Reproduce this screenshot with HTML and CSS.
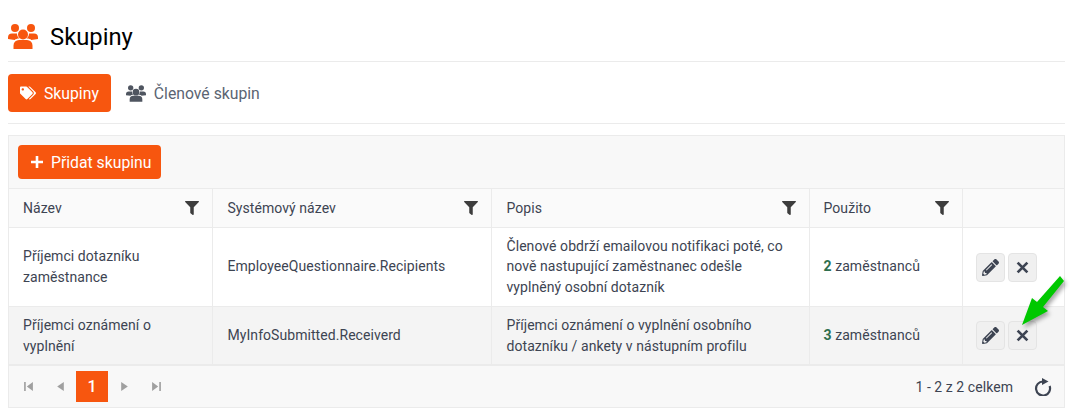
FILE: index.html
```html
<!DOCTYPE html>
<html>
<head>
    <title>Skupiny</title>
    <link rel="stylesheet" href="styles.css">
</head>
<body>
    <div class="page-title">
        <svg class="title-icon" viewBox="0 0 30 25"><circle cx="7" cy="4" r="4"/><circle cx="23" cy="4" r="4"/><circle cx="15" cy="10.500" r="5"/><path d="M5.500 25v-3.500a5.500 5.500 0 0 1 5.500-5.500h8a5.500 5.500 0 0 1 5.500 5.500V25zM0 15v-1.500a4 4 0 0 1 4-4h5c0 2 1 4 2.500 5-2.500 0-4 .5-4.800 1.500zM30 15v-1.500a4 4 0 0 0-4-4h-5c0 2-1 4-2.500 5 2.500 0 4 .5 4.800 1.500z"/></svg>
        <h1>Skupiny</h1>
    </div>

    <div class="tabs">
        <a class="tab active">
            <svg class="tag-icon" viewBox="0 0 640 512"><path d="M497.941 225.941L286.059 14.059A48 48 0 0 0 252.118 0H48C21.49 0 0 21.49 0 48v204.118a48 48 0 0 0 14.059 33.941l211.882 211.882c18.744 18.745 49.136 18.746 67.882 0l204.118-204.118c18.745-18.745 18.745-49.137 0-67.882zM112 160c-26.51 0-48-21.49-48-48s21.49-48 48-48 48 21.49 48 48-21.49 48-48 48zm513.941 133.823L421.823 497.941c-18.745 18.745-49.137 18.745-67.882 0l-.36-.36L527.64 323.522c16.999-16.999 26.36-39.6 26.36-63.64s-9.362-46.641-26.36-63.64L331.397 0h48.721a48 48 0 0 1 33.941 14.059l211.882 211.882c18.745 18.745 18.745 49.137 0 67.882z"/></svg>
            Skupiny
        </a>
        <a class="tab">
            <svg class="tab-icon" viewBox="0 0 30 25"><circle cx="7" cy="4" r="4"/><circle cx="23" cy="4" r="4"/><circle cx="15" cy="10.500" r="5"/><path d="M5.500 25v-3.500a5.500 5.500 0 0 1 5.500-5.500h8a5.500 5.500 0 0 1 5.500 5.500V25zM0 15v-1.500a4 4 0 0 1 4-4h5c0 2 1 4 2.500 5-2.500 0-4 .5-4.800 1.500zM30 15v-1.500a4 4 0 0 0-4-4h-5c0 2-1 4-2.500 5 2.500 0 4 .5 4.800 1.500z"/></svg>
            Členové skupin
        </a>
    </div>

    <div class="grid">
        <div class="toolbar">
            <button class="add-btn">
                <svg class="plus" viewBox="0 0 12 12"><path d="M6 0v12M0 6h12"/></svg>
                Přidat skupinu
            </button>
        </div>
        <table>
            <colgroup>
                <col class="col-name"><col class="col-system"><col class="col-desc"><col class="col-used"><col>
            </colgroup>
            <thead>
                <tr>
                    <th><div class="th-inner">Název <svg class="filter" viewBox="0 0 512 512"><path d="M487.976 0H24.028C2.71 0-8.047 25.866 7.058 40.971L192 225.941V432c0 7.831 3.821 15.17 10.237 19.662l80 55.98C298.02 518.69 320 507.493 320 487.98V225.941l184.947-184.97C520.021 25.896 509.338 0 487.976 0z"/></svg></div></th>
                    <th><div class="th-inner">Systémový název <svg class="filter" viewBox="0 0 512 512"><path d="M487.976 0H24.028C2.71 0-8.047 25.866 7.058 40.971L192 225.941V432c0 7.831 3.821 15.17 10.237 19.662l80 55.98C298.02 518.69 320 507.493 320 487.98V225.941l184.947-184.97C520.021 25.896 509.338 0 487.976 0z"/></svg></div></th>
                    <th><div class="th-inner">Popis <svg class="filter" viewBox="0 0 512 512"><path d="M487.976 0H24.028C2.71 0-8.047 25.866 7.058 40.971L192 225.941V432c0 7.831 3.821 15.17 10.237 19.662l80 55.98C298.02 518.69 320 507.493 320 487.98V225.941l184.947-184.97C520.021 25.896 509.338 0 487.976 0z"/></svg></div></th>
                    <th><div class="th-inner">Použito <svg class="filter" viewBox="0 0 512 512"><path d="M487.976 0H24.028C2.71 0-8.047 25.866 7.058 40.971L192 225.941V432c0 7.831 3.821 15.17 10.237 19.662l80 55.98C298.02 518.69 320 507.493 320 487.98V225.941l184.947-184.97C520.021 25.896 509.338 0 487.976 0z"/></svg></div></th>
                    <th></th>
                </tr>
            </thead>
            <tbody>
                <tr>
                    <td>Příjemci dotazníku zaměstnance</td>
                    <td>EmployeeQuestionnaire.Recipients</td>
                    <td>Členové obdrží emailovou notifikaci poté, co nově nastupující zaměstnanec odešle vyplněný osobní dotazník</td>
                    <td><b>2</b> zaměstnanců</td>
                    <td class="actions">
                        <button class="icon-btn"><svg class="pencil" viewBox="0 0 512 512"><path d="M497.9 142.1l-46.1 46.1c-4.7 4.7-12.3 4.7-17 0l-111-111c-4.7-4.7-4.7-12.3 0-17l46.1-46.1c18.7-18.7 49.1-18.7 67.9 0l60.1 60.1c18.8 18.7 18.8 49.1 0 67.9zM284.2 99.8L21.6 362.4.4 483.9c-2.9 16.4 11.4 30.6 27.8 27.8l121.5-21.3 262.6-262.6c4.7-4.7 4.7-12.3 0-17l-111-111c-4.8-4.7-12.4-4.7-17.1 0zM124.1 339.9c-5.5-5.5-5.5-14.3 0-19.8l154-154c5.5-5.5 14.3-5.5 19.8 0s5.5 14.3 0 19.8l-154 154c-5.5 5.5-14.3 5.5-19.8 0zM88 424h48v36.3l-64.5 11.3-31.1-31.1L51.7 376H88v48z"/></svg></button>
                        <button class="icon-btn"><svg class="times" viewBox="0 0 12 12"><path d="M1.500 1.500l9 9M10.500 1.500l-9 9"/></svg></button>
                    </td>
                </tr>
                <tr class="alt">
                    <td>Příjemci oznámení o vyplnění</td>
                    <td>MyInfoSubmitted.Receiverd</td>
                    <td>Příjemci oznámení o vyplnění osobního dotazníku / ankety v nástupním profilu</td>
                    <td><b>3</b> zaměstnanců</td>
                    <td class="actions">
                        <button class="icon-btn"><svg class="pencil" viewBox="0 0 512 512"><path d="M497.9 142.1l-46.1 46.1c-4.7 4.7-12.3 4.7-17 0l-111-111c-4.7-4.7-4.7-12.3 0-17l46.1-46.1c18.7-18.7 49.1-18.7 67.9 0l60.1 60.1c18.8 18.7 18.8 49.1 0 67.9zM284.2 99.8L21.6 362.4.4 483.9c-2.9 16.4 11.4 30.6 27.8 27.8l121.5-21.3 262.6-262.6c4.7-4.7 4.7-12.3 0-17l-111-111c-4.8-4.7-12.4-4.7-17.1 0zM124.1 339.9c-5.5-5.5-5.5-14.3 0-19.8l154-154c5.5-5.5 14.3-5.5 19.8 0s5.5 14.3 0 19.8l-154 154c-5.5 5.5-14.3 5.5-19.8 0zM88 424h48v36.3l-64.5 11.3-31.1-31.1L51.7 376H88v48z"/></svg></button>
                        <button class="icon-btn"><svg class="times" viewBox="0 0 12 12"><path d="M1.500 1.500l9 9M10.500 1.500l-9 9"/></svg></button>
                    </td>
                </tr>
            </tbody>
        </table>
        <div class="pager">
            <div class="pages">
                <span class="page-link"><svg class="page-icon" viewBox="0 0 10 10"><path d="M1 1h1.500v8H1zM9 1v8L3.500 5z"/></svg></span>
                <span class="page-link"><svg class="page-icon" viewBox="0 0 10 10"><path d="M8 1v8L2 5z"/></svg></span>
                <span class="page-num">1</span>
                <span class="page-link"><svg class="page-icon" viewBox="0 0 10 10"><path d="M2 1v8l6-4z"/></svg></span>
                <span class="page-link"><svg class="page-icon" viewBox="0 0 10 10"><path d="M9 1H7.500v8H9zM1 1v8l5.500-4z"/></svg></span>
            </div>
            <div class="pager-info">
                1 - 2 z 2 celkem
                <svg class="refresh" viewBox="0 0 18 18"><path class="refresh-arc" d="M9 3.500A7 7 0 1 0 15.600 8"/><path class="refresh-tip" d="M8 0v7l6.500-3.500z"/></svg>
            </div>
        </div>
    </div>

    <svg class="arrow" viewBox="0 0 54 60"><path d="M6 55L16 28l5 4L44 6l4 5-21 26 5 4z"/></svg>
</body>
</html>
```

FILE: styles.css
```css
body { margin: 0; padding: 0 5px 0 8px; font-family: Roboto, Arial, sans-serif; font-size: 14px; color: #3d4452; background: #fff; position: relative; }

.page-title { display: flex; align-items: center; gap: 12px; height: 62px; padding-top: 12px; box-sizing: border-box; border-bottom: 1px solid #ebebeb; }
.page-title h1 { margin: 0; font-size: 23.8px; font-weight: 400; color: #000; }
.title-icon { width: 30px; height: 25px; fill: #f7560f; }

.tabs { display: flex; gap: 5px; padding: 12px 0 11px; border-bottom: 1px solid #ebebeb; }
.tab { display: flex; align-items: center; gap: 8px; height: 38px; padding: 0 10px; border-radius: 4px; font-size: 15.75px; color: #5b6472; }
.tab.active { background: #f7560f; color: #fff; padding: 0 12px; }
.tab-icon { width: 20px; height: 17px; fill: #4f5560; }
.tag-icon { width: 16px; height: 14px; fill: #fff; }

.grid { margin-top: 11px; border: 1px solid #ebebeb; }
.toolbar { background: #f8f8f8; padding: 9px; height: 34px; }
.add-btn { display: flex; align-items: center; gap: 8px; height: 34px; padding: 0 10px 0 13px; border: none; border-radius: 4px; background: #f7560f; color: #fff; font-family: inherit; font-size: 15.75px; }
.plus { width: 12px; height: 12px; fill: none; stroke: #fff; stroke-width: 2.6; }

table { width: 100%; border-collapse: collapse; table-layout: fixed; }
.col-name { width: 203px; }
.col-system { width: 279px; }
.col-desc { width: 318px; }
.col-used { width: 153px; }
th, td { border: 1px solid #ebebeb; padding: 0 14px; text-align: left; font-weight: 400; line-height: 20.5px; letter-spacing: 0.06px; }
tr > :first-child { border-left: none; }
tr > :last-child { border-right: none; }
tr > :nth-child(2), tr > :nth-child(3) { padding-left: 15px; }
th { background: #fafafa; height: 38px; padding-right: 13px; }
td { height: 79px; padding-bottom: 1px; box-sizing: border-box; }
.alt td { height: 58px; background: #f4f4f4; padding-bottom: 0; }
td b { font-weight: 700; color: #2e6e4e; }
.th-inner { display: flex; justify-content: space-between; align-items: center; }
.filter { width: 14px; height: 14px; fill: #3d3d3d; }

td.actions { padding: 0 0 0 13px; white-space: nowrap; }
.icon-btn { display: inline-flex; align-items: center; justify-content: center; width: 29px; height: 29px; padding: 0; border: 1px solid #e4e4e4; border-radius: 4px; background: #f0f0f0; vertical-align: middle; }
.pencil { width: 17px; height: 17px; fill: #3d4452; }
.times { width: 13px; height: 13px; fill: none; stroke: #3d4452; stroke-width: 2.5; }

.pager { display: flex; justify-content: space-between; align-items: center; height: 41px; background: #f8f8f8; border-top: 1px solid #ebebeb; }
.pages { display: flex; align-items: center; padding-left: 3px; }
.page-link { display: flex; align-items: center; justify-content: center; width: 32px; height: 32px; }
.page-num { display: flex; align-items: center; justify-content: center; width: 32px; height: 31px; background: #f7560f; color: #fff; font-size: 16px; font-weight: 500; }
.page-icon { width: 11px; height: 11px; fill: #a0a0a0; }
.pager-info { display: flex; align-items: center; gap: 21px; padding-right: 12px; letter-spacing: 0.06px; }
.refresh { width: 18px; height: 18px; }
.refresh-arc { fill: none; stroke: #3d4452; stroke-width: 2.2; }
.refresh-tip { fill: #3d4452; }

.arrow { position: absolute; left: 1016px; top: 270px; width: 54px; height: 60px; fill: #00c800; filter: drop-shadow(2px 3px 2px rgba(0,0,0,.35)); }
```
